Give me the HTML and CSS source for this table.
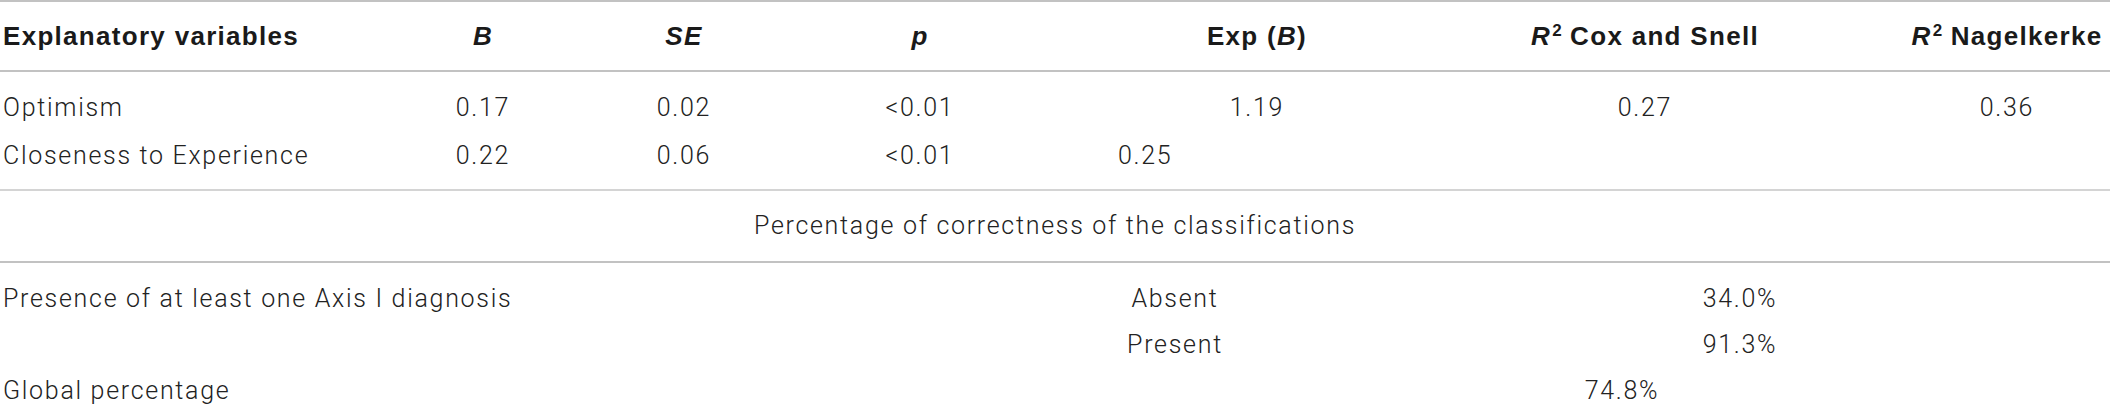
FILE: index.html
```html
<!DOCTYPE html>
<html lang="en">
<head>
<meta charset="utf-8">
<title>Logistic regression table</title>
<link rel="stylesheet" href="styles.css">
</head>
<body>
<div class="table">
  <div class="row top head">
    <div class="cell label">Explanatory variables</div>
    <div class="cell"><i>B</i></div>
    <div class="cell"><i>SE</i></div>
    <div class="cell"><i>p</i></div>
    <div class="cell">Exp (<i>B</i>)</div>
    <div class="cell"><i>R</i><sup>2</sup> Cox and Snell</div>
    <div class="cell"><i>R</i><sup>2</sup> Nagelkerke</div>
  </div>
  <div class="body-group first">
    <div class="row top data">
      <div class="cell label">Optimism</div>
      <div class="cell">0.17</div>
      <div class="cell">0.02</div>
      <div class="cell">&lt;0.01</div>
      <div class="cell">1.19</div>
      <div class="cell">0.27</div>
      <div class="cell">0.36</div>
    </div>
    <div class="row top data">
      <div class="cell label">Closeness to Experience</div>
      <div class="cell">0.22</div>
      <div class="cell">0.06</div>
      <div class="cell">&lt;0.01</div>
      <div class="cell left">0.25</div>
      <div class="cell"></div>
      <div class="cell"></div>
    </div>
  </div>
  <div class="row span-row">
    <div class="cell">Percentage of correctness of the classifications</div>
  </div>
  <div class="body-group second">
    <div class="row bottom data">
      <div class="cell label">Presence of at least one Axis I diagnosis</div>
      <div class="cell">Absent</div>
      <div class="cell value">34.0%</div>
    </div>
    <div class="row bottom data">
      <div class="cell label"></div>
      <div class="cell">Present</div>
      <div class="cell value">91.3%</div>
    </div>
    <div class="row bottom data">
      <div class="cell label">Global percentage</div>
      <div class="cell value wide">74.8%</div>
    </div>
  </div>
</div>
</body>
</html>
```

FILE: styles.css
```css
html, body {
  margin: 0;
  padding: 0;
  background: #ffffff;
  overflow: hidden;
}

.table {
  width: 2110px;
  overflow: hidden;
  font-family: Roboto, "Liberation Sans", sans-serif;
  font-weight: 300;
  font-size: 25px;
  letter-spacing: 1.7px;
  color: #222222;
  border-top: 2px solid #c2c2c2;
}

.row {
  display: grid;
  width: 2110px;
}

.row.top {
  grid-template-columns: 330px 306px 96px 376px 298px 478px 246px;
}

.row.bottom {
  grid-template-columns: 1057px 236px 817px;
}

.cell {
  text-align: center;
  white-space: nowrap;
}

.cell.label {
  text-align: left;
  padding-left: 3px;
}

.cell.left {
  text-align: left;
  padding-left: 10px;
}

.head {
  height: 68px;
  line-height: 68px;
  font-family: "Liberation Sans", Arial, sans-serif;
  font-weight: 700;
  font-size: 26px;
  letter-spacing: 1.3px;
  color: #1a1a1a;
  border-bottom: 2px solid #c2c2c2;
}

.head sup {
  font-size: 17px;
  line-height: 0;
  vertical-align: 9px;
  letter-spacing: 0;
  margin-left: 1px;
}

.data {
  line-height: 48px;
}

.body-group.first {
  padding-top: 12px;
  padding-bottom: 9px;
  border-bottom: 2px solid #d4d4d4;
}

.span-row {
  grid-template-columns: 1fr;
  height: 70px;
  line-height: 70px;
  border-bottom: 2px solid #c2c2c2;
}

.body-group.second {
  padding-top: 13px;
}

.bottom.data {
  line-height: 46px;
}

.cell.value {
  padding-left: 77px;
}

.cell.wide {
  grid-column: 2 / 4;
}
```
